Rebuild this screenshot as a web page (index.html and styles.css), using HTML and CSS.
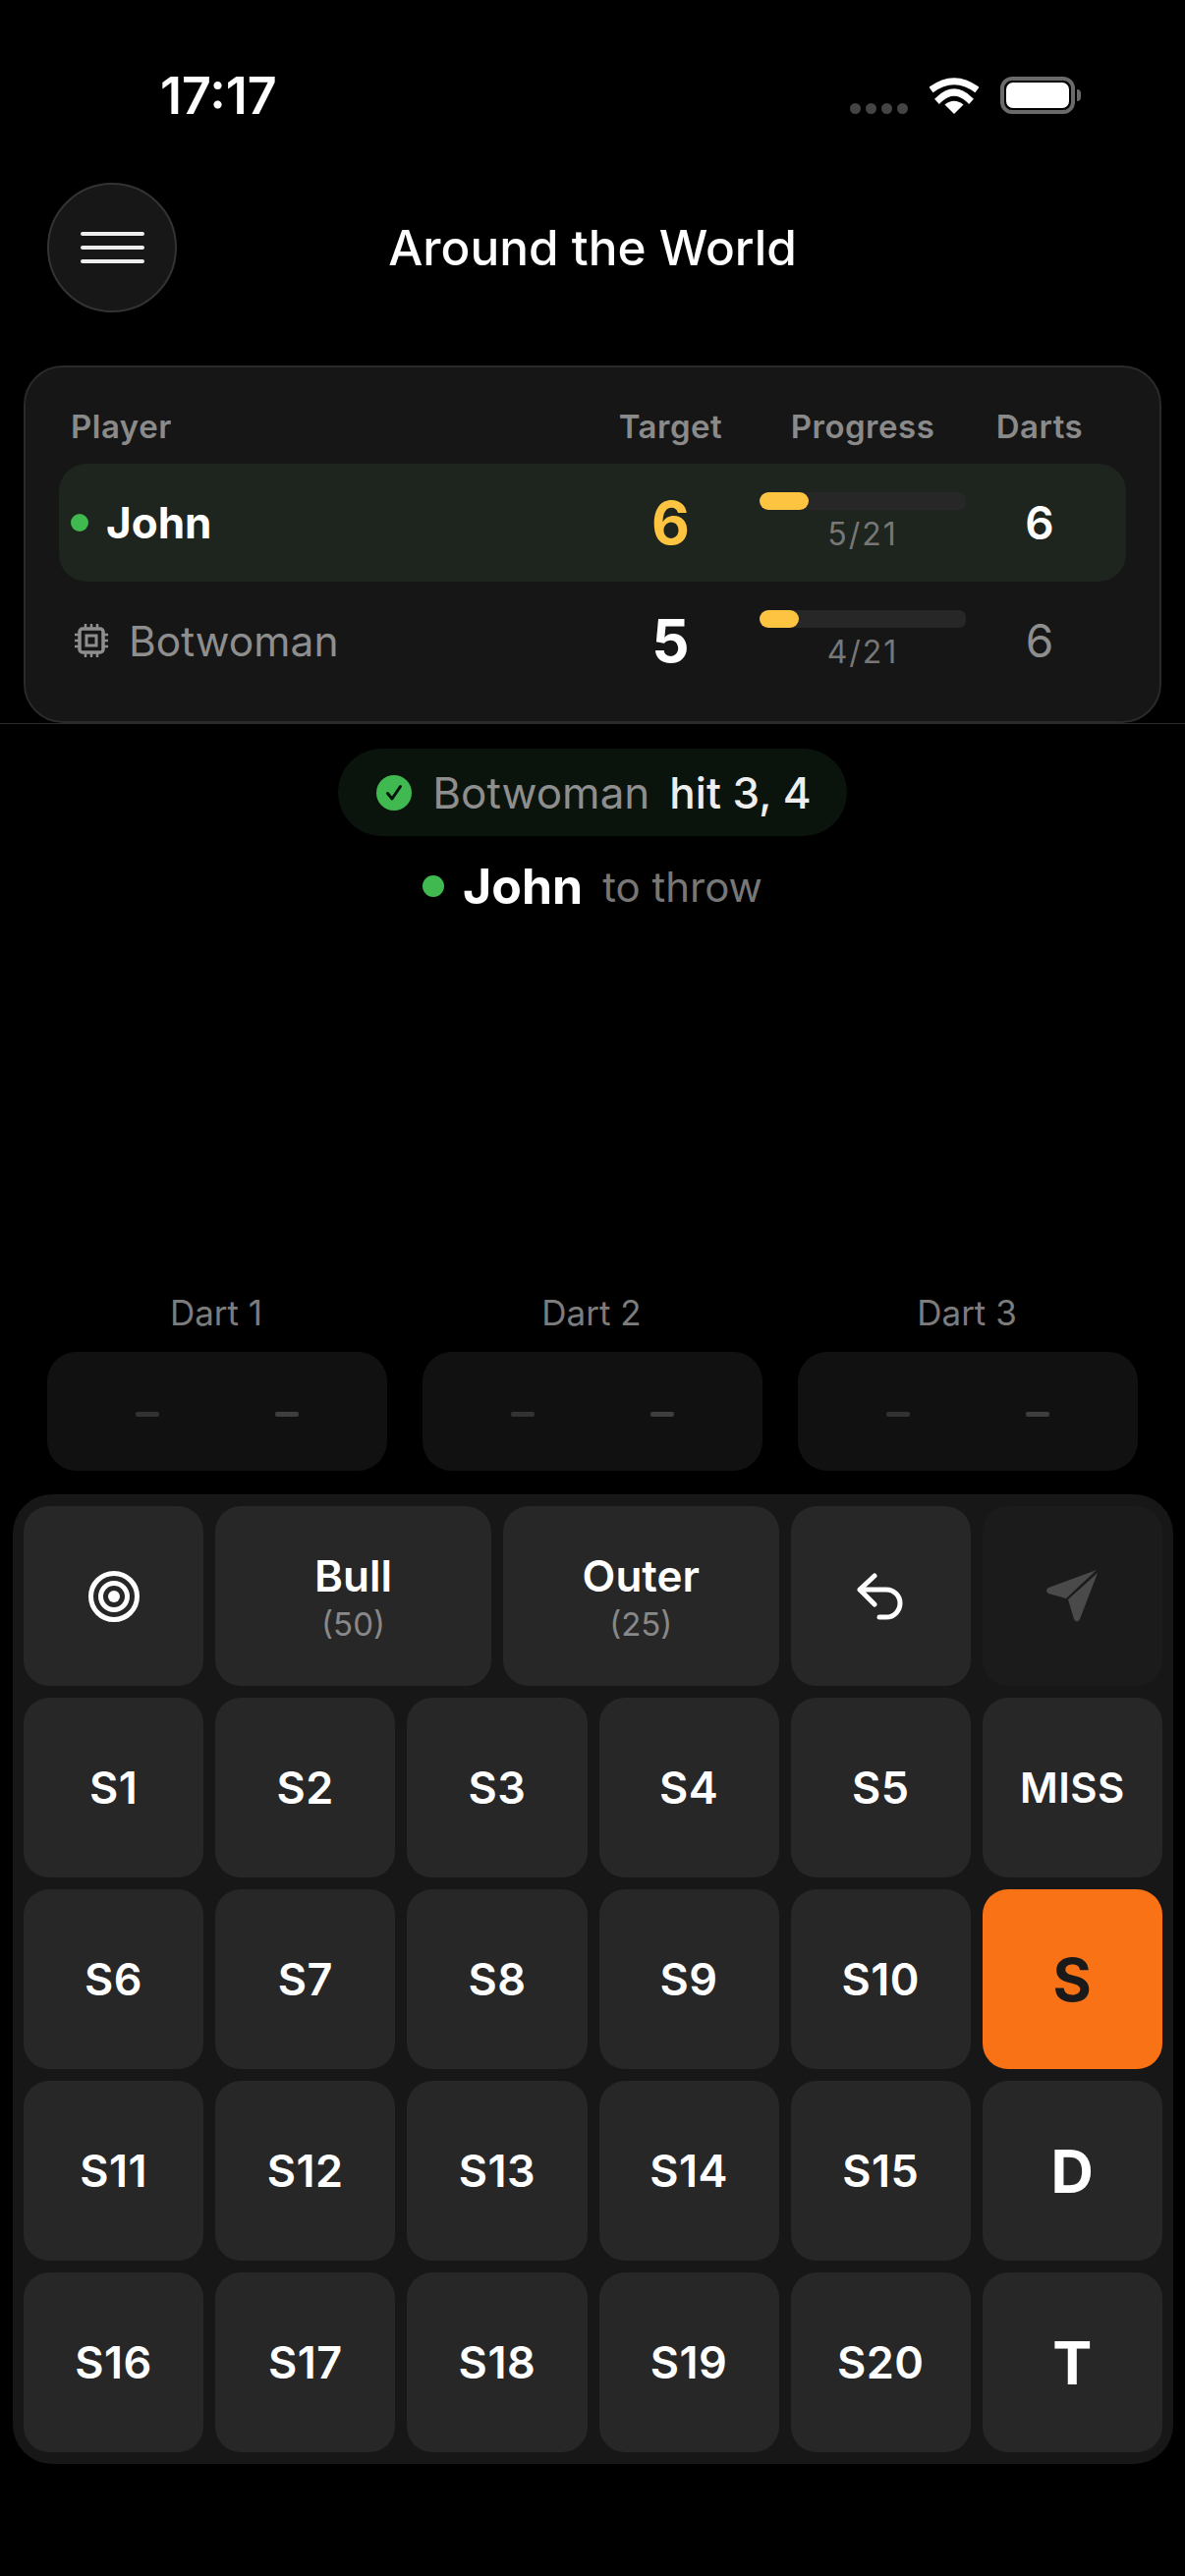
FILE: index.html
```html
<!DOCTYPE html>
<html lang="en">
<head>
    <meta charset="UTF-8">
    <meta name="viewport" content="width=device-width, initial-scale=1.0">
    <title>Around the World</title>
    <link rel="stylesheet" href="styles.css">
</head>
<body>
    <div class="status-bar">
        <span class="time">17:17</span>
        <div class="status-icons">
            <div class="signal"><i></i><i></i><i></i><i></i></div>
            <svg class="wifi" width="50" height="38" viewBox="0 0 50 38">
                <path d="M25 38 L15.500 28.500 Q25 21 34.500 28.500 Z" fill="#fff"/>
                <path d="M10 22 Q25 8 40 22" fill="none" stroke="#fff" stroke-width="7" stroke-linecap="square" transform="translate(0 1)"/>
                <path d="M1.500 10.500 Q25 -7 48.500 10.500" fill="none" stroke="#fff" stroke-width="7" transform="translate(0 3)"/>
            </svg>
            <div class="battery"><div class="battery-fill"></div></div>
            <div class="battery-cap"></div>
        </div>
    </div>

    <div class="header">
        <button class="menu-btn">
            <span></span><span></span><span></span>
        </button>
        <h1>Around the World</h1>
    </div>

    <div class="score-card">
        <div class="score-row score-head">
            <div class="name">Player</div>
            <div>Target</div>
            <div class="progress-head">Progress</div>
            <div>Darts</div>
        </div>
        <div class="score-row active">
            <div class="name"><span class="dot"></span>John</div>
            <div class="target gold">6</div>
            <div class="progress">
                <div class="track"><div class="fill" style="width: 24%"></div></div>
                <span>5/21</span>
            </div>
            <div class="darts">6</div>
        </div>
        <div class="score-row bot">
            <div class="name">
                <svg class="chip" width="36" height="36" viewBox="0 0 36 36" fill="none" stroke="#8e8e8e">
                    <rect x="6" y="6" width="24" height="24" rx="3" stroke-width="3.500"/>
                    <rect x="13" y="13" width="10" height="10" stroke-width="3"/>
                    <path d="M12 1v4M18 1v4M24 1v4M12 31v4M18 31v4M24 31v4M1 12h4M1 18h4M1 24h4M31 12h4M31 18h4M31 24h4" stroke-width="2.500"/>
                </svg>
                Botwoman
            </div>
            <div class="target">5</div>
            <div class="progress">
                <div class="track"><div class="fill" style="width: 19%"></div></div>
                <span>4/21</span>
            </div>
            <div class="darts">6</div>
        </div>
    </div>
    <div class="divider"></div>

    <div class="last-throw">
        <svg width="36" height="36" viewBox="0 0 36 36">
            <circle cx="18" cy="18" r="18" fill="#3fb950"/>
            <path d="M11.500 18.500l4.500 5.500L24.500 11.500" fill="none" stroke="#0b130d" stroke-width="3" stroke-linecap="round" stroke-linejoin="round"/>
        </svg>
        <span class="who">Botwoman</span>
        <span class="hit">hit 3, 4</span>
    </div>
    <div class="turn">
        <span class="dot big"></span>
        <span class="turn-name">John</span>
        <span class="turn-note">to throw</span>
    </div>

    <div class="dart-slots">
        <div class="slot">
            <label>Dart 1</label>
            <div class="slot-box"><i></i><i></i></div>
        </div>
        <div class="slot">
            <label>Dart 2</label>
            <div class="slot-box"><i></i><i></i></div>
        </div>
        <div class="slot">
            <label>Dart 3</label>
            <div class="slot-box"><i></i><i></i></div>
        </div>
    </div>

    <div class="keypad">
        <button class="key">
            <svg width="52" height="52" viewBox="0 0 52 52" fill="none" stroke="#fff" stroke-width="5">
                <circle cx="26" cy="26" r="23.500"/>
                <circle cx="26" cy="26" r="13.500"/>
                <circle cx="26" cy="26" r="6" fill="#fff" stroke="none"/>
            </svg>
        </button>
        <button class="key wide">Bull<small>(50)</small></button>
        <button class="key wide">Outer<small>(25)</small></button>
        <button class="key">
            <svg width="48" height="48" viewBox="0 0 48 48" fill="none" stroke="#fff" stroke-width="5" stroke-linecap="round" stroke-linejoin="round">
                <path d="M18 3L3 17L18 32M3 17H30A14 14 0 0 1 30 45H23"/>
            </svg>
        </button>
        <button class="key send">
            <svg width="54" height="54" viewBox="0 0 54 54" fill="#4a4a4a">
                <path d="M52 0L3 18Q-1 21 3 24L21 29Z"/>
                <path d="M53 3L23 30L29 50Q32 55 35 50Z"/>
            </svg>
        </button>

        <button class="key">S1</button>
        <button class="key">S2</button>
        <button class="key">S3</button>
        <button class="key">S4</button>
        <button class="key">S5</button>
        <button class="key miss">MISS</button>

        <button class="key">S6</button>
        <button class="key">S7</button>
        <button class="key">S8</button>
        <button class="key">S9</button>
        <button class="key">S10</button>
        <button class="key mult selected">S</button>

        <button class="key">S11</button>
        <button class="key">S12</button>
        <button class="key">S13</button>
        <button class="key">S14</button>
        <button class="key">S15</button>
        <button class="key mult">D</button>

        <button class="key">S16</button>
        <button class="key">S17</button>
        <button class="key">S18</button>
        <button class="key">S19</button>
        <button class="key">S20</button>
        <button class="key mult">T</button>
    </div>
</body>
</html>
```

FILE: styles.css
```css
* {
    box-sizing: border-box;
}
body {
    margin: 0;
    height: 2622px;
    background-color: #000;
    color: #fff;
    font-family: Inter, "Liberation Sans", sans-serif;
    overflow: hidden;
}
.status-bar {
    height: 186px;
    padding: 68px 106px 0 163px;
    display: flex;
    justify-content: space-between;
    align-items: flex-start;
}
.time {
    font-size: 52px;
    line-height: 60px;
    font-weight: 600;
}
.status-icons {
    display: flex;
    align-items: center;
    padding-top: 10px;
}
.signal {
    display: flex;
    gap: 5px;
    margin-top: 26px;
    margin-right: 22px;
}
.signal i {
    width: 11px;
    height: 11px;
    border-radius: 50%;
    background-color: #444;
}
.wifi {
    margin-right: 22px;
}
.battery {
    width: 76px;
    height: 38px;
    border: 4px solid #6a6a6a;
    border-radius: 12px;
    padding: 2px;
}
.battery-fill {
    height: 100%;
    background-color: #fff;
    border-radius: 7px;
}
.battery-cap {
    width: 4px;
    height: 12px;
    margin-left: 2px;
    background-color: #6a6a6a;
    border-radius: 0 4px 4px 0;
}
.header {
    display: grid;
    grid-template-columns: 132px 1fr 132px;
    align-items: center;
    padding: 0 48px;
    height: 132px;
}
h1 {
    margin: 0;
    font-size: 49.500px;
    font-weight: 500;
    text-align: center;
}
.menu-btn {
    width: 132px;
    height: 132px;
    border-radius: 50%;
    background-color: #171717;
    border: 2px solid #333;
    padding: 0;
    display: flex;
    flex-direction: column;
    align-items: center;
    justify-content: center;
    gap: 10px;
}
.menu-btn span {
    width: 65px;
    height: 4px;
    border-radius: 2px;
    background-color: #eee;
}
.score-card {
    margin: 54px 24px 0;
    height: 364px;
    padding: 36px 34px 0;
    background-color: #161616;
    border: 2px solid #2a2a2a;
    border-radius: 40px;
}
.score-row {
    display: grid;
    grid-template-columns: 1fr 120px 254px 120px;
    align-items: center;
    text-align: center;
    padding: 0 31px 0 12px;
    height: 120px;
}
.score-row > :nth-child(2) {
    padding-left: 3px;
}
.score-row > :last-child {
    padding-left: 6px;
}
.score-head {
    height: 62px;
    font-size: 33px;
    font-weight: 600;
    color: #8a8a8a;
    letter-spacing: 0.5px;
    padding-bottom: 14px;
}
.progress-head {
    padding-left: 20px;
}
.name {
    display: flex;
    align-items: center;
    text-align: left;
    font-size: 42.500px;
}
.score-head .name {
    font-size: 33px;
}
.active {
    background-color: #1e241e;
    border-radius: 28px;
}
.active .name {
    font-size: 44px;
    font-weight: 700;
}
.dot {
    width: 18px;
    height: 18px;
    margin-right: 18px;
    border-radius: 50%;
    background-color: #3fb950;
}
.bot .name {
    color: #8e8e8e;
}
.chip {
    margin: 0 20px 0 3px;
}
.target {
    font-size: 60px;
    font-weight: 700;
}
.gold {
    color: #fcc440;
}
.darts {
    font-size: 46px;
    font-weight: 600;
}
.bot .darts {
    color: #8e8e8e;
    font-weight: 400;
}
.progress {
    display: flex;
    flex-direction: column;
    align-items: center;
    padding: 0 12px 0 32px;
}
.track {
    width: 100%;
    height: 18px;
    border-radius: 7px;
    background-color: #272727;
    overflow: hidden;
}
.fill {
    height: 100%;
    border-radius: 9px;
    background-color: #fcc440;
}
.progress span {
    font-size: 32px;
    line-height: 38px;
    margin-top: 6px;
    letter-spacing: 2px;
    color: #777;
}
.divider {
    height: 1px;
    background-color: #2a2a2a;
}
.last-throw {
    width: fit-content;
    height: 89px;
    margin: 25px auto 0;
    padding: 0 36px 0 39px;
    display: flex;
    align-items: center;
    background-color: #0b130d;
    border-radius: 45px;
    font-size: 44px;
}
.who {
    margin-left: 21px;
    color: #8e8e8e;
}
.hit {
    margin-left: 20px;
    font-weight: 500;
    color: #eee;
}
.turn {
    display: flex;
    justify-content: center;
    align-items: center;
    height: 70px;
    margin-top: 16px;
}
.dot.big {
    width: 22px;
    height: 22px;
    margin-right: 19px;
}
.turn-name {
    font-size: 50px;
    font-weight: 700;
}
.turn-note {
    margin-left: 20px;
    font-size: 42px;
    color: #777;
}
.dart-slots {
    display: grid;
    grid-template-columns: repeat(3, 346px);
    justify-content: space-between;
    padding: 0 48px;
    margin-top: 379px;
}
.slot label {
    display: block;
    height: 40px;
    line-height: 40px;
    margin-bottom: 20px;
    padding-right: 2px;
    font-size: 35px;
    text-align: center;
    color: #7c7c7c;
}
.slot-box {
    height: 121px;
    padding-top: 6px;
    border-radius: 30px;
    background-color: #111;
    display: flex;
    justify-content: center;
    align-items: center;
    gap: 118px;
}
.slot-box i {
    width: 24px;
    height: 5px;
    border-radius: 2px;
    background-color: #3e3e3e;
}
.slot-box i:first-child {
    background-color: #323232;
}
.keypad {
    margin: 24px 12px 0 13px;
    padding: 12px 11px;
    display: grid;
    grid-template-columns: repeat(12, 1fr);
    grid-auto-rows: 183px;
    gap: 12px;
    background-color: #171717;
    border-radius: 40px;
}
.key {
    grid-column: span 2;
    border: none;
    border-radius: 26px;
    background-color: #272727;
    color: #fff;
    font-family: inherit;
    font-size: 45px;
    font-weight: 600;
    letter-spacing: 0.5px;
    padding: 0;
    display: flex;
    flex-direction: column;
    align-items: center;
    justify-content: center;
}
.wide {
    grid-column: span 3;
    font-size: 44px;
    letter-spacing: 0;
}
.key small {
    font-size: 33px;
    font-weight: 400;
    color: #888;
    margin-top: 2px;
}
.send {
    background-color: #1b1b1b;
}
.miss {
    font-size: 42px;
}
.mult {
    font-size: 60px;
    font-weight: 700;
}
.selected {
    background-color: #f97316;
    color: #1a1a1a;
}
```
